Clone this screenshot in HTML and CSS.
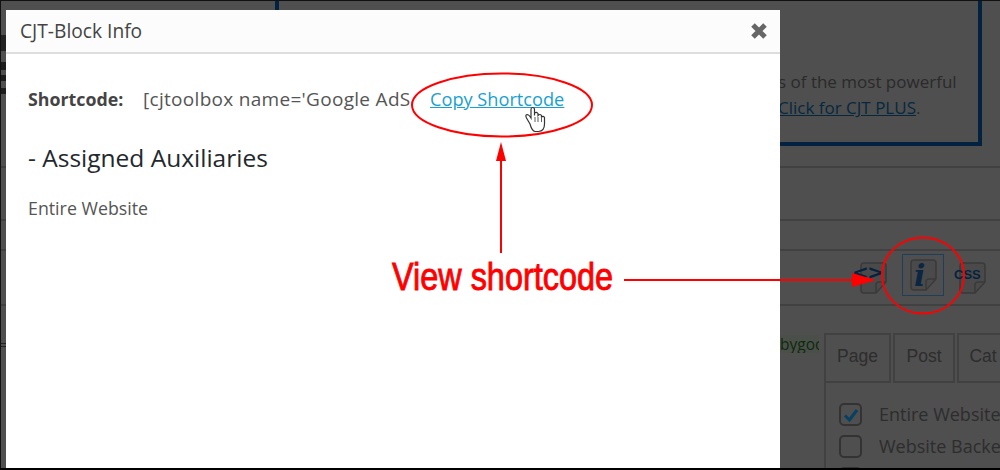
FILE: index.html
```html
<!DOCTYPE html>
<html lang="en">
<head>
<meta charset="utf-8">
<title>CJT-Block Info</title>
<link rel="stylesheet" href="styles.css">
</head>
<body>
<div class="page">
  <section class="notice">
    <p class="notice-line">s of the most powerful</p>
    <p class="notice-line"><a class="notice-link">Click for CJT PLUS</a>.</p>
  </section>
  <div class="row row-a"></div>
  <div class="row row-b"></div>
  <div class="row row-tools">
    <span class="tool">
      <svg class="doc" viewBox="0 0 27 32" width="27" height="32"><path class="sheet" d="M4 1H23Q26 1 26 4V20L16 31H4Q1 31 1 28V4Q1 1 4 1Z"/><path class="fold" d="M16 31V23Q16 20 19 20H26"/></svg>
      <span class="tool-code">&lt;&gt;</span>
    </span>
    <span class="tool tool-active">
      <svg class="doc" viewBox="0 0 27 32" width="27" height="32"><path class="sheet" d="M4 1H23Q26 1 26 4V20L16 31H4Q1 31 1 28V4Q1 1 4 1Z"/><path class="fold" d="M16 31V23Q16 20 19 20H26"/></svg>
      <span class="tool-i">i</span>
    </span>
    <span class="tool">
      <svg class="doc" viewBox="0 0 27 32" width="27" height="32"><path class="sheet" d="M4 1H23Q26 1 26 4V20L16 31H4Q1 31 1 28V4Q1 1 4 1Z"/><path class="fold" d="M16 31V23Q16 20 19 20H26"/></svg>
      <span class="tool-css">CSS</span>
    </span>
  </div>
  <div class="lower">
    <span class="green">bygoo</span>
    <div class="assign">
      <div class="tabs">
        <span class="tab tab-page">Page</span>
        <span class="tab tab-post">Post</span>
        <span class="tab tab-cat">Cat</span>
      </div>
      <div class="panel">
        <div class="check-row"><span class="box"><svg viewBox="0 0 22 22" width="22" height="22"><path class="tick" d="M5 11.500L9.500 16L17 6"/></svg></span>Entire Website</div>
        <div class="check-row"><span class="box"></span>Website Backe</div>
        <div class="check-row"><span class="box"></span></div>
      </div>
    </div>
  </div>

  <div class="modal">
    <header class="modal-head">
      <h2 class="modal-title">CJT-Block Info</h2>
      <svg class="close" viewBox="0 0 18 18" width="18" height="18"><path d="M3 3L15 15M15 3L3 15"/></svg>
    </header>
    <div class="modal-body">
      <div class="code-row">
        <strong class="code-label">Shortcode:</strong>
        <span class="code-value">[cjtoolbox name='Google AdS</span>
        <a class="code-copy">Copy Shortcode</a>
      </div>
      <h3 class="aux-title">- Assigned Auxiliaries</h3>
      <p class="aux-item">Entire Website</p>
    </div>
  </div>

  <svg class="marks" viewBox="0 0 1000 470" width="1000" height="470">
    <ellipse class="ring" cx="502" cy="105" rx="90" ry="31.500"/>
    <ellipse class="ring" cx="923" cy="275.500" rx="41" ry="38"/>
    <path class="line" d="M501 253V160M624 280H860"/>
    <path class="head" d="M501 142L506 161H496ZM876 280L852 273V287Z"/>
    <text class="view" x="392" y="290" textLength="221" lengthAdjust="spacingAndGlyphs">View shortcode</text>
    <g class="hand">
      <path d="M530 124L526.500 118Q525 115 527 114.500Q529 114.500 531 118V109.500Q531 107.500 532.500 107.500Q534.500 107.500 534.500 109.500V115.500V113Q536.500 111.500 538 113.500V115.500Q540 113.500 541.500 115.500V117Q543.500 115.500 544.500 117.500V124Q544.500 131 538.500 131.500H535Q532 131 530 124Z"/>
      <path class="hand-lines" d="M535 117V122M538 117V122M541.500 118V122"/>
    </g>
  </svg>
</div>
</body>
</html>
```
FILE: styles.css
```css
* { box-sizing: border-box; }
html, body { margin: 0; padding: 0; }
body { width: 1000px; height: 470px; overflow: hidden; background: #000; }

.page {
  position: relative;
  width: 1000px;
  height: 468px;
  overflow: hidden;
  border-top: 1px solid #111;
  border-left: 1px solid #111;
  background: #4f4f4f;
  font-family: "Open Sans", "Noto Sans", sans-serif;
  color: #2a2a2a;
}
.page::before {
  content: "";
  position: absolute;
  left: 0;
  top: 0;
  width: 5px;
  height: 350px;
  background: linear-gradient(#0000 34px, #222 34px, #222 50px, #0000 50px, #0000 61px, #1c1c1c 61px, #1c1c1c 69px, #0000 69px, #0000 74px, #1c1c1c 74px, #1c1c1c 80px, #0000 80px, #0000 87px, #1c1c1c 87px, #1c1c1c 93px, #0000 93px, #0000 342px, #222 342px, #222 343px, #0000 343px, #0000 345px, #222 345px, #222 346px, #0000 346px);
}

.notice {
  width: 707px;
  height: 145px;
  margin-left: 274px;
  padding: 68px 0 0 499px;
  border: solid #03223f;
  border-width: 0 4px 4px 4px;
}
.notice-line {
  margin: 0;
  font-size: 17px;
  line-height: 26px;
  white-space: nowrap;
}
.notice-link { color: #06283f; text-decoration: underline; }

.row { border-bottom: 2px solid #414141; }
.row-a { height: 22px; }
.row-b { height: 53px; }

.row-tools {
  display: flex;
  justify-content: flex-end;
  align-items: flex-start;
  gap: 15px;
  height: 57px;
  margin-top: 28px;
  padding: 0 14px 0 0;
  border-top: 2px solid #414141;
}
.tool {
  position: relative;
  display: flex;
  align-items: center;
  justify-content: center;
  width: 27px;
  height: 32px;
  margin-top: 11px;
}
.tool-active {
  width: 42px;
  height: 42px;
  margin-top: 3px;
  border: 1px solid #1e3f5a;
}
.doc { display: block; }
.sheet { fill: #4a4a4a; stroke: #3a3a3a; stroke-width: 1.500; }
.fold { fill: none; stroke: #3a3a3a; stroke-width: 1.500; }
.tool-code {
  position: absolute;
  left: -8px;
  top: -1px;
  font: bold 20px/22px "DejaVu Sans", sans-serif;
  letter-spacing: -1.500px;
  color: #05233f;
}
.tool-i {
  position: absolute;
  left: 11px;
  top: 4px;
  font: italic bold 30px/34px "DejaVu Serif", serif;
  color: #0a2642;
}
.tool-css {
  position: absolute;
  left: -5px;
  top: 6px;
  font: bold 13px/14px "Liberation Sans", sans-serif;
  color: #05233f;
}

.lower {
  display: flex;
  align-items: flex-start;
  margin-top: 27px;
  padding-left: 779px;
}
.green {
  flex: none;
  width: 39px;
  height: 18px;
  margin-top: 2px;
  font-size: 15.500px;
  line-height: 18px;
  overflow: hidden;
  background: #4b4f4a;
  color: #0d2a0a;
}
.assign { flex: none; width: 200px; margin-left: 5px; }
.tabs { display: flex; gap: 2px; height: 50px; }
.tab {
  height: 50px;
  padding-top: 10px;
  border: 2px solid #414141;
  font: 17.500px/22px "Liberation Sans", sans-serif;
  color: #2d2d2d;
  text-align: center;
}
.tab-page { width: 67px; }
.tab-post { width: 62px; }
.tab-cat { width: 52px; }
.panel {
  height: 90px;
  margin-top: -1px;
  padding: 21px 0 0 13px;
  border-left: 2px solid #414141;
}
.check-row {
  display: flex;
  align-items: center;
  gap: 17px;
  height: 22px;
  margin-bottom: 10px;
  font-size: 18px;
  color: #2d2d2d;
  white-space: nowrap;
}
.box {
  flex: none;
  width: 23px;
  height: 23px;
  border: 2px solid #333;
  border-radius: 5px;
}
.box svg { display: block; margin: -1px; }
.tick { fill: none; stroke: #064064; stroke-width: 3; }

.modal {
  position: absolute;
  left: 5px;
  top: 9px;
  width: 774px;
  height: 470px;
  background: #fff;
}
.modal-head {
  display: flex;
  align-items: center;
  justify-content: space-between;
  height: 44px;
  padding: 0 12px 2px 14px;
  background: #fcfcfc;
  border-bottom: 2px solid #ddd;
}
.modal-title {
  margin: 0;
  font-size: 19.200px;
  font-weight: 400;
  color: #444;
}
.close { display: block; margin-top: 2px; }
.close path { fill: none; stroke: #666; stroke-width: 5; }
.modal-body { padding: 34px 0 0 22px; }
.code-row {
  display: flex;
  align-items: baseline;
  height: 22px;
  line-height: 22px;
  color: #555;
}
.code-label { flex: none; width: 115px; font-size: 17.800px; font-weight: 700; color: #444; }
.code-value { flex: none; width: 270px; white-space: nowrap; font-size: 19px; letter-spacing: 0.300px; }
.code-copy { margin-left: 17px; color: #1a9fd1; text-decoration: underline; white-space: nowrap; font-size: 18.200px; }
.aux-title {
  margin: 32px 0 0;
  font-size: 24.500px;
  line-height: 32px;
  font-weight: 500;
  color: #23282d;
}
.aux-item {
  margin: 22px 0 0;
  font-size: 17.800px;
  line-height: 24px;
  color: #555;
}

.marks { position: absolute; left: -1px; top: -1px; }
.ring { fill: none; stroke: #f00; stroke-width: 2; }
.line { fill: none; stroke: #f00; stroke-width: 2; }
.head { fill: #f00; }
.view { fill: #f00; stroke: #f00; stroke-width: 0.900; font: 38px "Liberation Sans", sans-serif; }
.hand path { fill: #fff; stroke: #333; stroke-width: 1.200; }
.hand .hand-lines { fill: none; stroke-width: 0.800; }
```
